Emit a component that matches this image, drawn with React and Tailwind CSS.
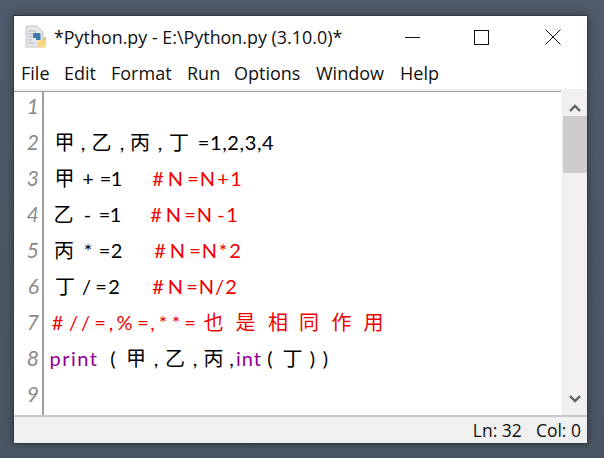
import React from "react";

const T = ({ c = "", children }) => <span className={"flex justify-center whitespace-pre shrink-0 " + c}>{children}</span>;
const R = "text-[#f00000]";
const P = "text-[#900090]";

function Row({ n, children }) {
  return (
    <div className="flex h-8 pb-1 items-center shrink-0">
      <div className="w-[25px] text-right shrink-0 italic text-[#8a8a8a] text-[21px] font-['Lato',sans-serif]">{n}</div>
      <div className="w-[4px] shrink-0" />
      <div className="flex items-center text-[20px] leading-none text-black font-['Lato','Noto_Sans_CJK_TC',sans-serif]">{children}</div>
    </div>
  );
}

function PyIcon() {
  return (
    <svg width="23" height="24" viewBox="0 0 23 24" className="shrink-0">
      <path d="M1 1h11l6 6v15H1z" fill="#e4e6e8" stroke="#c4c6c8" />
      <path d="M3 6h8M3 9h6M3 12h4M3 15h4M3 18h6" stroke="#b9bdc2" strokeWidth="1" />
      <path d="M8 8h6a1.5 1.5 0 0 1 1.5 1.5V15H11v-2H8z" fill="#3c78aa" />
      <path d="M13 16h5v-4h3v6a2 2 0 0 1-2 2h-6z" fill="#f7c65b" />
      <path d="M12 15h9v8h-9z" fill="#fbd98b" opacity="0.7" />
    </svg>
  );
}

export default function App() {
  return (
    <div className="w-[604px] h-[458px] overflow-hidden bg-gradient-to-b from-[#4f5b6a] to-[#4a5563] pl-[13px] pt-[15px] font-['Open_Sans',sans-serif]">
      <div className="w-[575px] h-[429px] border border-[#333b45] bg-white flex flex-col shadow-[0_0_8px_rgba(0,0,0,0.35)]">
        {/* title bar */}
        <div className="h-[42px] flex items-center pl-[11px] shrink-0">
          <PyIcon />
          <span className="ml-[6px] text-[17.9px] text-[#111] whitespace-nowrap">*Python.py - E:\Python.py (3.10.0)*</span>
          <div className="ml-auto flex items-center">
            <svg width="15" height="15" viewBox="0 0 15 15" className="mr-[54px]"><path d="M0 7.5h15" stroke="#111" /></svg>
            <svg width="15" height="15" viewBox="0 0 15 15" className="mr-[56px]"><rect x="0.5" y="0.5" width="14" height="14" fill="none" stroke="#111" /></svg>
            <svg width="16" height="16" viewBox="0 0 16 16" className="mr-[26px]"><path d="M0.5 0.5l15 15M15.5 0.5l-15 15" stroke="#111" /></svg>
          </div>
        </div>
        {/* menu */}
        <div className="h-[31px] flex items-center pl-[7px] text-[18px] text-[#111] shrink-0">
          <span className="w-[43px]">File</span>
          <span className="w-[47px]">Edit</span>
          <span className="w-[76px]">Format</span>
          <span className="w-[47px]">Run</span>
          <span className="w-[82px]">Options</span>
          <span className="w-[84px]">Window</span>
          <span>Help</span>
        </div>
        {/* editor */}
        <div className="flex-1 flex bg-[#f0f0f0] min-h-0">
          <div className="w-[547px] mt-[2px] flex min-h-0">
            <div className="flex-1 bg-white border-t border-[#a0a0a0] overflow-hidden flex flex-col gap-1 relative">
              <Row n="1" />
              <Row n="2">
                <T c="ml-[14px] w-[15px]">甲</T>
                <T c="ml-[8px] w-[6px]">,</T>
                <T c="ml-[7px] w-[17px]">乙</T>
                <T c="ml-[9px] w-[6px]">,</T>
                <T c="ml-[7px] w-[16px]">丙</T>
                <T c="ml-[9px] w-[6px]">,</T>
                <T c="ml-[9px] w-[14px]">丁</T>
                <T c="ml-[12px] w-[76px] tracking-[0.6px]">=1,2,3,4</T>
              </Row>
              <Row n="3">
                <T c="ml-[14px] w-[15px]">甲</T>
                <T c="ml-[11px] w-[10px]">+</T>
                <T c="ml-[8px] w-[9px]">=</T>
                <T c="ml-[2px] w-[9px]">1</T>
                <T c={"ml-[30px] w-[14px] " + R}>#</T>
                <T c={"ml-[4px] w-[13px] " + R}>N</T>
                <T c={"ml-[6px] w-[10px] " + R}>=</T>
                <T c={"ml-[3px] w-[13px] " + R}>N</T>
                <T c={"ml-[4px] w-[10px] " + R}>+</T>
                <T c={"ml-[3px] w-[10px] " + R}>1</T>
              </Row>
              <Row n="4">
                <T c="ml-[12px] w-[17px]">乙</T>
                <T c="ml-[11px] w-[9px]">-</T>
                <T c="ml-[8px] w-[9px]">=</T>
                <T c="ml-[2px] w-[9px]">1</T>
                <T c={"ml-[29px] w-[14px] " + R}>#</T>
                <T c={"ml-[4px] w-[13px] " + R}>N</T>
                <T c={"ml-[5px] w-[10px] " + R}>=</T>
                <T c={"ml-[3px] w-[13px] " + R}>N</T>
                <T c={"ml-[5px] w-[10px] " + R}>-</T>
                <T c={"ml-[1px] w-[10px] " + R}>1</T>
              </Row>
              <Row n="5">
                <T c="ml-[13px] w-[16px]">丙</T>
                <T c="ml-[11px] w-[10px]">*</T>
                <T c="ml-[7px] w-[9px]">=</T>
                <T c="ml-[3px] w-[9px]">2</T>
                <T c={"ml-[32px] w-[14px] " + R}>#</T>
                <T c={"ml-[4px] w-[13px] " + R}>N</T>
                <T c={"ml-[6px] w-[10px] " + R}>=</T>
                <T c={"ml-[3px] w-[13px] " + R}>N</T>
                <T c={"ml-[2px] w-[10px] " + R}>*</T>
                <T c={"ml-[2px] w-[10px] " + R}>2</T>
              </Row>
              <Row n="6">
                <T c="ml-[15px] w-[14px]">丁</T>
                <T c="ml-[11px] w-[7px]">/</T>
                <T c="ml-[6px] w-[10px]">=</T>
                <T c="ml-[3px] w-[10px]">2</T>
                <T c={"ml-[32px] w-[14px] " + R}>#</T>
                <T c={"ml-[4px] w-[13px] " + R}>N</T>
                <T c={"ml-[5px] w-[10px] " + R}>=</T>
                <T c={"ml-[3px] w-[13px] " + R}>N</T>
                <T c={"ml-[3px] w-[7px] " + R}>/</T>
                <T c={"ml-[3px] w-[10px] " + R}>2</T>
              </Row>
              <Row n="7">
                <div className={"flex items-center " + R}>
                  <T c="ml-[8px] w-[13px]">#</T>
                  <T c="ml-[6px] w-[7px]">/</T>
                  <T c="ml-[5px] w-[7px]">/</T>
                  <T c="ml-[6px] w-[10px]">=</T>
                  <T c="ml-[3px] w-[6px]">,</T>
                  <T c="ml-[4px] w-[13px]">%</T>
                  <T c="ml-[7px] w-[10px]">=</T>
                  <T c="ml-[1px] w-[7px]">,</T>
                  <T c="ml-[2px] w-[10px]">*</T>
                  <T c="ml-[3px] w-[10px]">*</T>
                  <T c="ml-[4px] w-[10px]">=</T>
                  <T c="ml-[10px] w-[17px]">也</T>
                  <T c="ml-[15px] w-[17px]">是</T>
                  <T c="ml-[14px] w-[20px]">相</T>
                  <T c="ml-[12px] w-[18px]">同</T>
                  <T c="ml-[14px] w-[19px]">作</T>
                  <T c="ml-[14px] w-[17px]">用</T>
                </div>
              </Row>
              <Row n="8">
                <T c={"ml-[6px] w-[50px] tracking-[1.5px] " + P}>print</T>
                <T c="ml-[11px] w-[6px]">(</T>
                <T c="ml-[12px] w-[16px]">甲</T>
                <T c="ml-[9px] w-[6px]">,</T>
                <T c="ml-[7px] w-[18px]">乙</T>
                <T c="ml-[8px] w-[6px]">,</T>
                <T c="ml-[7px] w-[17px]">丙</T>
                <T c="ml-[7px] w-[5px]">,</T>
                <T c={"w-[28px] ml-[1px] tracking-[1px] " + P}>int</T>
                <T c="ml-[4px] w-[6px]">(</T>
                <T c="ml-[12px] w-[15px]">丁</T>
                <T c="ml-[9px] w-[7px]">)</T>
                <T c="ml-[6px] w-[7px]">)</T>
              </Row>
              <Row n="9" />
              <div className="absolute left-[28px] top-0 bottom-0 w-[2px] bg-[#a0a0a0]" />
            </div>
          </div>
          {/* scrollbar */}
          <div className="w-[26px] flex flex-col items-center bg-[#f0f0f0] border-l border-[#f8f8f8] shrink-0">
            <div className="h-[27px] w-full flex items-end justify-center pb-[4px] shrink-0">
              <svg width="12" height="8" viewBox="0 0 12 8"><path d="M1 7l5-5 5 5" fill="none" stroke="#606060" strokeWidth="2.4" /></svg>
            </div>
            <div className="w-[24px] h-[57px] bg-[#cdcdcd] shrink-0" />
            <div className="flex-1" />
            <div className="h-[24px] w-full flex items-start justify-center pt-[4px] shrink-0">
              <svg width="12" height="8" viewBox="0 0 12 8"><path d="M1 1l5 5 5-5" fill="none" stroke="#606060" strokeWidth="2.4" /></svg>
            </div>
          </div>
        </div>
        {/* status */}
        <div className="h-[28px] bg-[#f0f0f0] border-t-2 border-[#c8c8c8] flex items-center justify-end pr-[6px] text-[17.5px] text-[#111] shrink-0">
          <span className="mr-[14px]">Ln: 32</span>
          <span>Col: 0</span>
        </div>
      </div>
    </div>
  );
}
